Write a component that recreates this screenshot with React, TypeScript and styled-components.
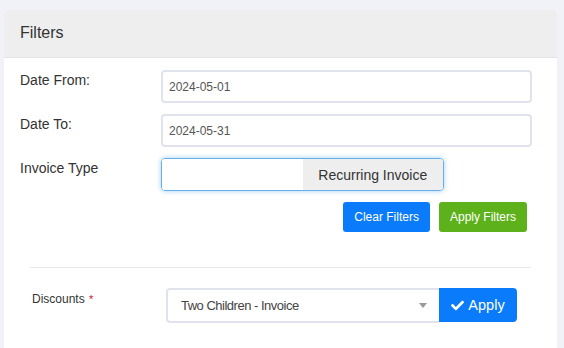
import React from "react"
import styled, { createGlobalStyle } from "styled-components"
import { FaCheck } from "react-icons/fa"

const GlobalStyle = createGlobalStyle`
  body {
    margin: 0;
    background: #f1f2f7;
    font-family: "Liberation Sans", Arial, sans-serif;
    color: #333;
  }
`

interface FieldRowProps {
  label: string
  children: React.ReactNode
}

const FieldRow = ({ label, children }: FieldRowProps) => (
  <Row>
    <Label>{label}</Label>
    {children}
  </Row>
)

const App = () => {
  return (
    <Page>
      <GlobalStyle />
      <Card>
        <CardHeader>Filters</CardHeader>
        <CardBody>
          <FieldRow label="Date From:">
            <DateInput readOnly value="2024-05-01" />
          </FieldRow>
          <FieldRow label="Date To:">
            <DateInput readOnly value="2024-05-31" />
          </FieldRow>
          <FieldRow label="Invoice Type">
            <TypeToggle>
              <TypeOption />
              <TypeOption active>Recurring Invoice</TypeOption>
            </TypeToggle>
          </FieldRow>
          <Actions>
            <Button variant="blue">Clear Filters</Button>
            <Button variant="green">Apply Filters</Button>
          </Actions>
          <Divider />
          <DiscountRow>
            <SmallLabel>
              Discounts <Required>*</Required>
            </SmallLabel>
            <InputGroup>
              <Select>
                <SelectText>Two Children - Invoice</SelectText>
                <Caret />
              </Select>
              <ApplyButton>
                <FaCheck size={13} />
                Apply
              </ApplyButton>
            </InputGroup>
          </DiscountRow>
        </CardBody>
      </Card>
    </Page>
  )
}

const Page = styled.div`
  padding: 10px 7px 0 4px;
`
const Card = styled.div`
  background: #fff;
  border-radius: 4px 4px 0 0;
  overflow: hidden;
  min-height: 340px;
`
const CardHeader = styled.div`
  height: 48px;
  box-sizing: border-box;
  display: flex;
  align-items: center;
  padding: 0 16px 2px;
  background: #eeeeee;
  border-bottom: 1px solid #e3e3e3;
  font-size: 16px;
  color: #333;
`
const CardBody = styled.div`
  padding: 12px 25px 0 16px;
`
const Row = styled.div`
  display: grid;
  grid-template-columns: 141px 1fr;
  align-items: start;
  margin-bottom: 11px;
`
const Label = styled.label`
  font-size: 14px;
  line-height: 16px;
  padding-top: 2px;
  color: #333;
`
const DateInput = styled.input`
  height: 33px;
  box-sizing: border-box;
  border: 2px solid #e0e3ed;
  border-radius: 4px;
  padding: 0 6px;
  font-family: "Liberation Sans", Arial, sans-serif;
  font-size: 12px;
  color: #555;
  outline: none;
`
const TypeToggle = styled.div`
  display: flex;
  width: 283px;
  height: 33px;
  box-sizing: border-box;
  border: 1px solid #66afe9;
  border-radius: 4px;
  box-shadow: 0 0 5px rgba(102, 175, 233, 0.6);
  overflow: hidden;
`
const TypeOption = styled.div<{ active?: boolean }>`
  flex: 1;
  display: flex;
  align-items: center;
  justify-content: center;
  background: ${p => (p.active ? "#eeeeee" : "#fff")};
  font-size: 14px;
  color: #333;
`
const Actions = styled.div`
  display: flex;
  justify-content: flex-end;
  gap: 9px;
  padding-right: 5px;
`
const Button = styled.button<{ variant: "blue" | "green" }>`
  height: 30px;
  padding: 0 11px;
  border: none;
  border-radius: 3px;
  background: ${p => (p.variant === "blue" ? "#0a7cfb" : "#5db11a")};
  color: #fff;
  font-family: "Liberation Sans", Arial, sans-serif;
  font-size: 12px;
`
const Divider = styled.hr`
  margin: 35px 1px 20px 10px;
  border: none;
  border-top: 1px solid #e6e8ee;
`
const DiscountRow = styled.div`
  display: grid;
  grid-template-columns: 134px auto;
  align-items: start;
  padding-left: 12px;
`
const SmallLabel = styled.label`
  font-size: 12px;
  line-height: 14px;
  padding-top: 4px;
  color: #333;
`
const Required = styled.span`
  color: #c8102e;
  font-size: 11px;
  margin-left: 1px;
`
const InputGroup = styled.div`
  display: flex;
  align-items: flex-start;
`
const Select = styled.div`
  width: 273px;
  height: 35px;
  box-sizing: border-box;
  display: flex;
  align-items: center;
  justify-content: space-between;
  padding: 0 12px 0 13px;
  border: 2px solid #e0e3ed;
  border-right: none;
  border-radius: 4px 0 0 4px;
`
const SelectText = styled.span`
  font-size: 13px;
  letter-spacing: -0.5px;
  color: #444;
`
const Caret = styled.span`
  width: 0;
  height: 0;
  border-left: 4px solid transparent;
  border-right: 4px solid transparent;
  border-top: 5px solid #999;
`
const ApplyButton = styled.button`
  width: 78px;
  height: 34px;
  display: flex;
  align-items: center;
  justify-content: center;
  gap: 4px;
  border: none;
  border-radius: 0 4px 4px 0;
  background: #0a7cfb;
  color: #fff;
  font-family: "Liberation Sans", Arial, sans-serif;
  font-size: 14.5px;
`

export default App
